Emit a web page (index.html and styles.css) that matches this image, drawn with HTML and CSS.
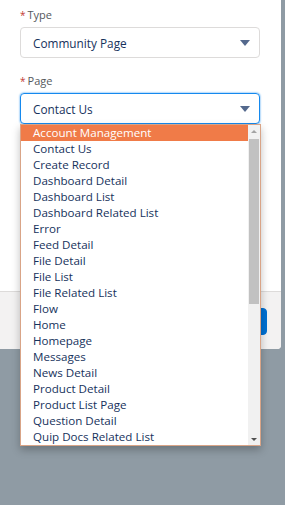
FILE: index.html
```html
<!DOCTYPE html>
<html lang="en">
<head>
    <meta charset="UTF-8">
    <meta name="viewport" content="width=device-width, initial-scale=1.0">
    <title>Page Picker</title>
    <link rel="stylesheet" href="styles.css">
</head>
<body>

<div class="modal">
    <div class="modal-body">
        <div class="field">
            <label class="field-label"><abbr class="required">*</abbr>Type</label>
            <div class="select">
                <span>Community Page</span>
                <span class="caret"></span>
            </div>
        </div>
        <div class="field field-page">
            <label class="field-label"><abbr class="required">*</abbr>Page</label>
            <div class="select select-focus">
                <span>Contact Us</span>
                <span class="caret"></span>
            </div>
            <div class="listbox">
                <ul class="options">
                    <li class="option selected">Account Management</li>
                    <li class="option">Contact Us</li>
                    <li class="option">Create Record</li>
                    <li class="option">Dashboard Detail</li>
                    <li class="option">Dashboard List</li>
                    <li class="option">Dashboard Related List</li>
                    <li class="option">Error</li>
                    <li class="option">Feed Detail</li>
                    <li class="option">File Detail</li>
                    <li class="option">File List</li>
                    <li class="option">File Related List</li>
                    <li class="option">Flow</li>
                    <li class="option">Home</li>
                    <li class="option">Homepage</li>
                    <li class="option">Messages</li>
                    <li class="option">News Detail</li>
                    <li class="option">Product Detail</li>
                    <li class="option">Product List Page</li>
                    <li class="option">Question Detail</li>
                    <li class="option">Quip Docs Related List</li>
                </ul>
                <div class="scrollbar">
                    <span class="scroll-arrow up"></span>
                    <div class="scroll-track"><div class="scroll-thumb"></div></div>
                    <span class="scroll-arrow down"></span>
                </div>
            </div>
        </div>
    </div>
    <div class="modal-footer">
        <button class="btn-save">Save</button>
    </div>
</div>

</body>
</html>
```

FILE: styles.css
```css
body {
    margin: 0;
    background-color: #8f9ba4;
    font-family: 'Open Sans', sans-serif;
    height: 505px;
    overflow: hidden;
}

.modal {
    width: 281px;
    background-color: #fff;
    border-radius: 0 0 4px 0;
}

.modal-body {
    padding: 6px 21px 20px 20px;
    height: 265px;
}

.field {
    margin-bottom: 14px;
}

.field-page {
    position: relative;
}

.field-label {
    display: block;
    font-size: 11px;
    color: #54585c;
    line-height: 18px;
    margin-bottom: 3px;
}

.required {
    color: #c23934;
    text-decoration: none;
    margin-right: 2px;
    font-size: 10px;
}

.select {
    height: 29px;
    border: 1px solid #dddbda;
    border-radius: 4px;
    display: flex;
    align-items: center;
    justify-content: space-between;
    padding: 0 9px 0 12px;
    font-size: 11.8px;
    color: #16325c;
}

.select-focus {
    border-color: #1589ee;
    box-shadow: 0 0 2px #1589ee;
}

.caret {
    width: 0;
    height: 0;
    border-left: 5px solid transparent;
    border-right: 5px solid transparent;
    border-top: 6px solid #54698d;
}

.listbox {
    position: absolute;
    top: 52px;
    left: 0;
    width: 239px;
    border: 1px solid #d9a487;
    background-color: #fff;
    display: flex;
    box-shadow: 0 4px 8px rgba(0, 0, 0, 0.25);
}

.options {
    list-style: none;
    margin: 0;
    padding: 0;
    flex: 1;
}

.option {
    height: 16px;
    line-height: 16px;
    padding-left: 12px;
    font-size: 11.6px;
    color: #16325c;
    white-space: nowrap;
}

.option.selected {
    background-color: #f07b48;
    color: #fff;
}

.scrollbar {
    width: 12px;
    background-color: #f1f1f1;
    display: flex;
    flex-direction: column;
}

.scroll-arrow {
    height: 12px;
    display: flex;
    align-items: center;
    justify-content: center;
}

.scroll-arrow.up::before,
.scroll-arrow.down::before {
    content: '';
    border-left: 3px solid transparent;
    border-right: 3px solid transparent;
}

.scroll-arrow.up::before {
    border-bottom: 3px solid #a3a3a3;
}

.scroll-arrow.down::before {
    border-top: 3px solid #505050;
}

.scroll-track {
    flex: 1;
    padding: 2px 1px;
}

.scroll-thumb {
    height: 165px;
    background-color: #c1c1c1;
}

.modal-footer {
    border-top: 1px solid #dddbda;
    background-color: #f3f2f2;
    height: 58px;
    padding: 16px 14px 0 0;
    box-sizing: border-box;
    display: flex;
    justify-content: flex-end;
    border-radius: 0 0 4px 0;
}

.btn-save {
    height: 27px;
    background-color: #0070d2;
    border: 1px solid #0070d2;
    border-radius: 4px;
    color: #fff;
    font-family: 'Open Sans', sans-serif;
    font-size: 13px;
    padding: 0 16px;
}
```
